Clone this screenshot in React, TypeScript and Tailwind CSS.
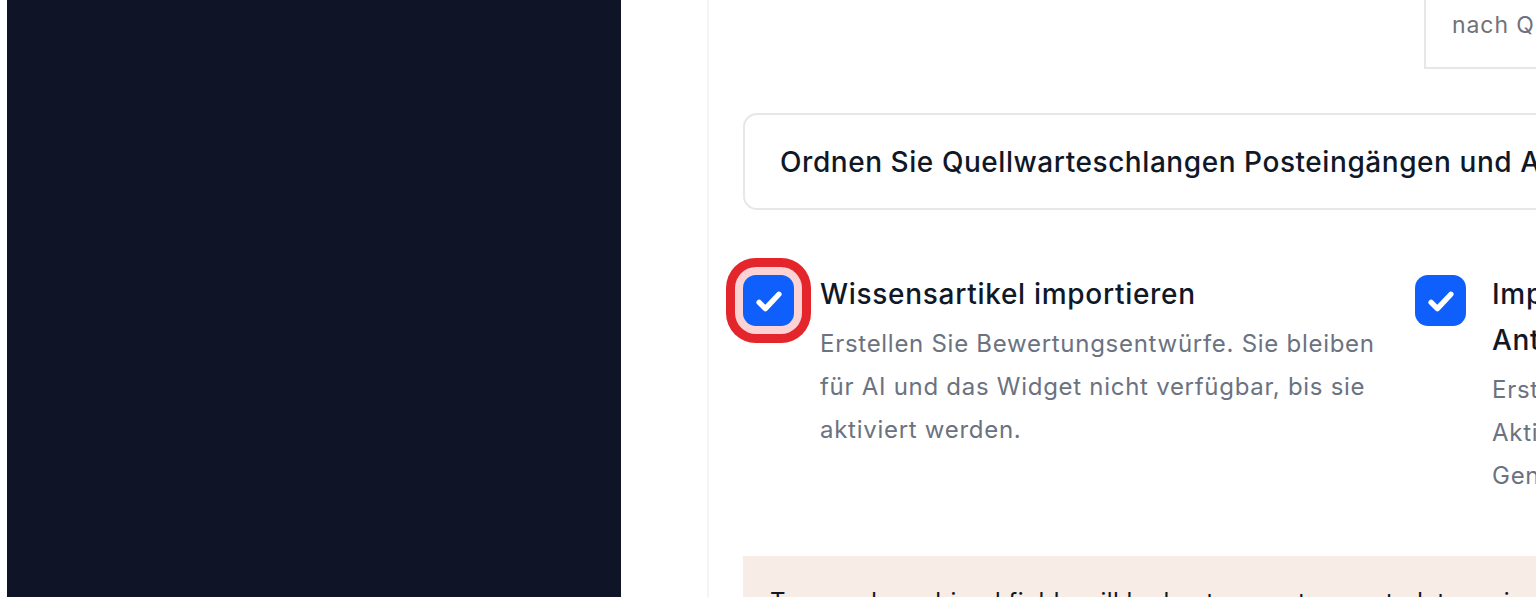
import React from "react";

const CheckMark: React.FC = () => (
  <svg viewBox="0 0 24 24" className="h-[36px] w-[36px]" fill="none">
    <path
      d="M5.4 12.9l4.2 4.2 9-9.6"
      stroke="white"
      strokeWidth="3.6"
      strokeLinecap="round"
      strokeLinejoin="round"
    />
  </svg>
);

const options = [
  {
    title: "Wissensartikel importieren",
    description:
      "Erstellen Sie Bewertungsentwürfe. Sie bleiben für AI und das Widget nicht verfügbar, bis sie aktiviert werden.",
    focused: true,
  },
  {
    title: "Importieren Sie Ihre Makros als Antworten",
    description:
      "Erstellen Sie Antwortentwürfe aus Makros. Aktivieren Sie sie vor der Nutzung. Genehmigungen bleiben erhalten.",
    focused: false,
  },
];

const App: React.FC = () => {
  return (
    <div
      className="flex h-[597px] w-[1536px] overflow-hidden bg-white"
      style={{ fontFamily: "Inter, 'Noto Sans', sans-serif" }}
    >
      {/* Left dark panel */}
      <div className="w-[7px] shrink-0 bg-white" />
      <div className="w-[614px] shrink-0 bg-[#0f1426]" />

      {/* Main area */}
      <div className="w-[86px] shrink-0 bg-white" />
      <div className="flex-1 border-l-2 border-[#f3f4f6] pl-[34px]">
        <div className="w-[1240px]">
          {/* Search */}
          <div className="flex">
            <div className="-mt-[18px] ml-[681px] flex h-[87px] w-[420px] items-center whitespace-nowrap border-2 border-[#e5e7eb] pl-[26px] text-[23px] tracking-[0.04em] text-[#71717a]">
              nach Quellwarteschlangen suchen
            </div>
          </div>

          {/* Mapping hint */}
          <div className="mt-[44px] flex h-[97px] items-center whitespace-nowrap rounded-[14px] border-2 border-[#e5e7eb] px-[35px] text-[28px] font-medium tracking-[0.02em] text-[#101828]">
            Ordnen Sie Quellwarteschlangen Posteingängen und Agenten zu
          </div>

          {/* Import options */}
          <div className="mt-[65px] grid grid-cols-[647px_647px] gap-x-[25px]">
            {options.map((opt, index) => (
              <div key={index} className="flex items-start gap-[26px]">
                <div
                  className={
                    opt.focused
                      ? "flex h-[51px] w-[51px] shrink-0 items-center justify-center rounded-[13px] bg-[#0e5ffc] shadow-[0_0_0_8px_#fbd3d4,0_0_0_17px_#e4262c]"
                      : "flex h-[51px] w-[51px] shrink-0 items-center justify-center rounded-[13px] bg-[#0e5ffc]"
                  }
                >
                  <CheckMark />
                </div>
                <div className="-mt-[4px] w-[560px]">
                  <h3 className="text-[28px] font-medium leading-[46px] tracking-[0.025em] text-[#101828]">
                    {opt.title}
                  </h3>
                  <p className="mt-[5px] text-[24px] leading-[43px] tracking-[0.03em] text-[#6b7280]">
                    {opt.description}
                  </p>
                </div>
              </div>
            ))}
          </div>

          {/* Notice */}
          <div className="mt-[59px] bg-[#f8ece7] px-[27px] pb-[28px] pt-[28px] text-[24px] leading-[36px] tracking-[0.02em] text-[#101828]">
            Tags and combined fields will be kept as custom metadata on imported conversations.
          </div>
        </div>
      </div>
    </div>
  );
};

export default App;
